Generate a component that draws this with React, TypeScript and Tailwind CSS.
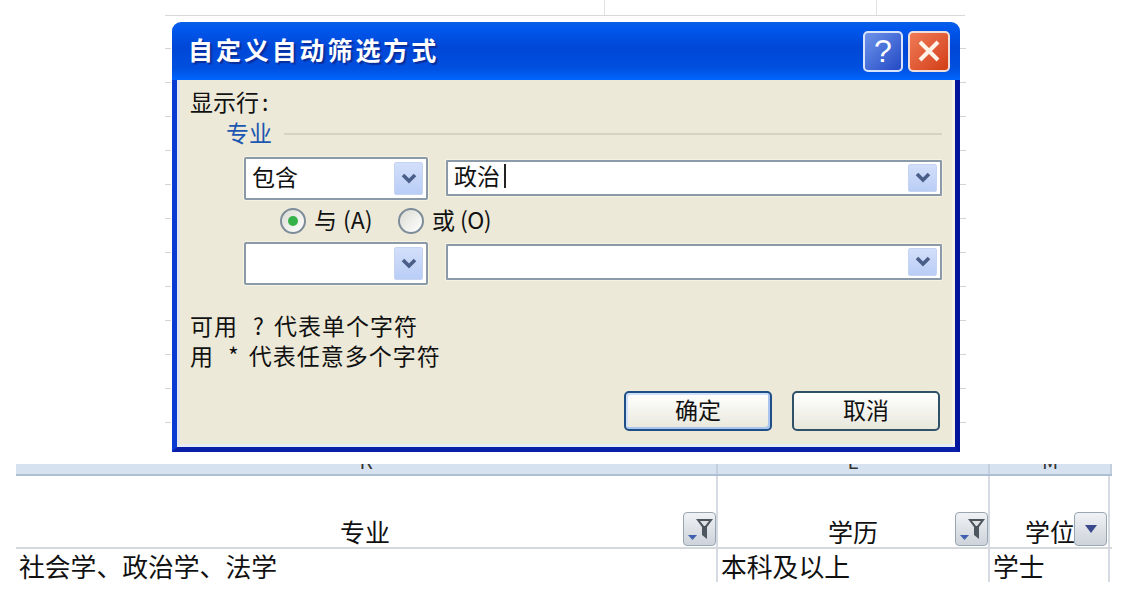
import React from 'react';

const FONT = "font-['Noto_Sans_CJK_SC','Liberation_Sans',sans-serif]";

const Chevron = () => (
  <svg width="18" height="14" viewBox="0 0 18 14">
    <path d="M3 3 L9 9 L15 3" fill="none" stroke="#4a5f88" strokeWidth="3.6" />
  </svg>
);

const ArrowBtn = ({ h }: { h: string }) => (
  <div className={`w-[29px] ${h} mr-[3px] flex items-center justify-center rounded-[2px] bg-gradient-to-b from-[#d3dffa] to-[#b9cdf6] border border-[#c6d4f4]`}>
    <Chevron />
  </div>
);

const Combo = ({ text }: { text?: string }) => (
  <div className="w-[184px] h-[43px] border-[2px] border-[#8a9aa8] rounded-[2px] bg-white flex items-center justify-between pl-[6px] shadow-[0_0_0_1px_#f7f3e4]">
    <span className="text-[23px] leading-none text-[#111] pb-[5px]">{text}</span>
    <ArrowBtn h="h-[33px]" />
  </div>
);

const WideCombo = ({ text, caret, className }: { text?: string; caret?: boolean; className: string }) => (
  <div className={`w-[496px] h-[36px] border-[2px] border-[#8a9aa8] rounded-[1px] bg-white flex items-center justify-between pl-[6px] shadow-[0_0_0_1px_#f7f3e4] ${className}`}>
    <span className="text-[23px] leading-none text-[#111] flex items-center">
      <span className="pb-[5px]">{text}</span>
      {caret && <span className="w-[2px] h-[24px] bg-[#222] ml-[4px] mb-[3px]" />}
    </span>
    <ArrowBtn h="h-[28px]" />
  </div>
);

const Radio = ({ on }: { on?: boolean }) => (
  <div className="w-[26px] h-[26px] rounded-full border-[2px] border-[#7d8c99] bg-gradient-to-br from-[#dcdcd4] to-white flex items-center justify-center">
    {on && <div className="w-[10px] h-[10px] rounded-full bg-[#35b24a]" />}
  </div>
);

const DialogButton = ({ label, primary }: { label: string; primary?: boolean }) => (
  <div
    className={
      primary
        ? 'w-[148px] h-[40px] pb-[3px] rounded-[5px] border-[2px] border-[#1d4f86] bg-gradient-to-b from-white to-[#e8e8dc] shadow-[inset_-2px_-2px_0_#a9c4ee,inset_2px_2px_0_#cfe0f8] flex items-center justify-center text-[23px] text-[#111]'
        : 'w-[148px] h-[40px] pb-[3px] rounded-[5px] border-[2px] border-[#2f5269] bg-gradient-to-b from-white to-[#e8e8dc] flex items-center justify-center text-[23px] text-[#111]'
    }
  >
    {label}
  </div>
);

const Ticks = () => (
  <div className="flex flex-col pt-[26px] gap-[33px]">
    {Array.from({ length: 12 }).map((_, i) => (
      <div key={i} className="w-[6px] h-[1px] bg-[#d4d4d4]" />
    ))}
  </div>
);

const FilterBtn = ({ plain }: { plain?: boolean }) => (
  <div className="w-[33px] h-[34px] rounded-[4px] border border-[#9aa5b2] bg-gradient-to-b from-[#f0f2f5] to-[#cdd3da] flex items-center justify-center shrink-0">
    {plain ? (
      <svg width="16" height="10" viewBox="0 0 16 10">
        <path d="M2 1 H14 L8 9 Z" fill="#3a4a8c" />
      </svg>
    ) : (
      <svg width="30" height="28" viewBox="0 0 30 28">
        <path d="M11 4 H28 L22 12 V24 L17 20 V12 Z" fill="#4d565f" />
        <path d="M15 6 H24 L20 11 H19 Z" fill="#dfe3e6" />
        <path d="M3 20 H12 L7.5 25 Z" fill="#3f5fb0" />
      </svg>
    )}
  </div>
);

export default function App() {
  return (
    <div className={`w-[1126px] h-[598px] overflow-hidden bg-white ${FONT}`}>
      {/* sheet behind the dialog */}
      <div className="h-[22px] pl-[165px]">
        <div className="w-[800px] h-[16px] flex items-start border-b border-[#d8d8d8]">
          <div className="w-[440px] h-[15px] border-r border-[#e2e2e2]" />
          <div className="w-[272px] h-[15px] border-r border-[#e2e2e2]" />
        </div>
      </div>

      <div className="flex h-[430px]">
        <div className="w-[172px] flex justify-end pr-[1px]">
          <Ticks />
        </div>

        {/* dialog */}
        <div className="w-[788px] h-[430px] flex flex-col rounded-t-[9px] overflow-hidden">
          <div className="h-[58px] shrink-0 flex items-center justify-between pl-[16px] pr-[10px] bg-[linear-gradient(180deg,#0a5fe6_0%,#0058ee_10%,#0047d6_45%,#0050e0_80%,#0066ff_100%)]">
            <span className="text-[25px] pb-[3px] font-bold tracking-[2.9px] text-white [text-shadow:2px_2px_1px_#0a2f9c]">
              自定义自动筛选方式
            </span>
            <div className="flex gap-[5px]">
              <div className="w-[40px] h-[41px] rounded-[5px] border-[2px] border-[#d8e4fb] bg-gradient-to-br from-[#6f93ea] to-[#2448c4] flex items-center justify-center">
                <span className="text-[32px] leading-none text-white font-['Liberation_Sans',sans-serif]">?</span>
              </div>
              <div className="w-[42px] h-[41px] rounded-[5px] border-[2px] border-[#f0dfd8] bg-gradient-to-br from-[#ef7a55] to-[#d23c12] flex items-center justify-center">
                <svg width="24" height="24" viewBox="0 0 24 24">
                  <path d="M3 3 L21 21 M21 3 L3 21" stroke="#fff4ea" strokeWidth="4" />
                </svg>
              </div>
            </div>
          </div>

          <div className="h-[372px] shrink-0 border-l-[5px] border-r-[5px] border-b-[5px] border-l-[#0b3ad2] border-r-[#00159c] border-b-[#0a1fa8]">
            <div className="h-[367px] flex flex-col bg-[#ece9d8] border-r-[3px] border-b-[3px] border-l-[3px] border-r-[#f3f1e6] border-b-[#e6ecf4] border-l-[#dfe6ee]">
              <div className="h-[28px] mt-[7px] pl-[10px] text-[23px] leading-[28px] text-[#111]">
                显示行<span className="ml-[3px]">:</span>
              </div>
              <div className="h-[28px] mt-[5px] pl-[46px] pr-[10px] flex items-center gap-[12px]">
                <span className="text-[23px] leading-[28px] pb-[4px] text-[#1c57b0]">专业</span>
                <div className="flex-1 h-[2px] bg-[#d6d3c2]" />
              </div>
              <div className="h-[43px] mt-[9px] pl-[64px] flex items-center gap-[18px]">
                <Combo text="包含" />
                <WideCombo text="政治" caret className="mb-[2px]" />
              </div>
              <div className="h-[26px] mt-[8px] pl-[100px] flex items-center text-[23px] text-[#111]">
                <Radio on />
                <span className="ml-[8px] pb-[4px] w-[84px] whitespace-pre">与<span className="ml-[6px]">(A)</span></span>
                <Radio />
                <span className="ml-[8px] pb-[4px] whitespace-pre">或<span className="ml-[5px] tracking-[-0.5px]">(O)</span></span>
              </div>
              <div className="h-[43px] mt-[8px] pl-[64px] flex items-center gap-[18px]">
                <Combo />
                <WideCombo className="mb-[4px]" />
              </div>
              <div className="mt-[25px] pl-[10px] text-[23px] leading-[30px] tracking-[1px] text-[#111]">
                <div>可用<span className="ml-[15px]">?</span><span className="ml-[9px]">代表单个字符</span></div>
                <div>用<span className="ml-[14px]">*</span><span className="ml-[9px]">代表任意多个字符</span></div>
              </div>
              <div className="mt-[21px] pr-[12px] flex justify-end gap-[20px]">
                <DialogButton label="确定" primary />
                <DialogButton label="取消" />
              </div>
            </div>
          </div>
        </div>

        <div className="w-[6px]">
          <Ticks />
        </div>
      </div>

      {/* worksheet fragment */}
      <div className="mt-[12px] pl-[16px] w-[1112px]">
        <div className="h-[12px] flex bg-[#d7e2f1] border-b-[2px] border-[#aebfd4]">
          <div className="w-[702px] overflow-hidden text-center border-r-[2px] border-[#c3cfdf]"><div className="text-[20px] leading-[2px] -mt-[4px] text-[#333]">K</div></div>
          <div className="w-[272px] overflow-hidden text-center border-r-[2px] border-[#c3cfdf]"><div className="text-[20px] leading-[2px] -mt-[4px] text-[#333]">L</div></div>
          <div className="flex-1 overflow-hidden text-center border-r-[2px] border-[#c3cfdf]"><div className="text-[20px] leading-[2px] -mt-[4px] text-[#333]">M</div></div>
        </div>
        <div className="h-[73px] flex border-b-[2px] border-[#d5d9dc] text-[25px] text-[#111]">
          <div className="w-[702px] flex items-end justify-center relative border-r-[2px] border-[#d5dbe3]">
            <span className="leading-[32px] pr-[2px]">专业</span>
            <div className="absolute right-0 bottom-[1px]"><FilterBtn /></div>
          </div>
          <div className="w-[272px] flex items-end justify-center relative border-r-[2px] border-[#d5dbe3]">
            <span className="leading-[32px]">学历</span>
            <div className="absolute right-0 bottom-[1px]"><FilterBtn /></div>
          </div>
          <div className="w-[120px] flex items-end pl-[35px] relative border-r-[2px] border-[#d5dbe3]">
            <span className="leading-[32px]">学位</span>
            <div className="absolute right-[1px] bottom-[1px]"><FilterBtn plain /></div>
          </div>
        </div>
        <div className="h-[33px] flex text-[25.8px] leading-[33px] text-[#111]">
          <div className="w-[702px] pl-[3px] border-r-[2px] border-[#d5dbe3]">社会学、政治学、法学</div>
          <div className="w-[272px] pl-[3px] border-r-[2px] border-[#d5dbe3]">本科及以上</div>
          <div className="w-[120px] pl-[3px] border-r-[2px] border-[#d5dbe3]">学士</div>
        </div>
      </div>
    </div>
  );
}
